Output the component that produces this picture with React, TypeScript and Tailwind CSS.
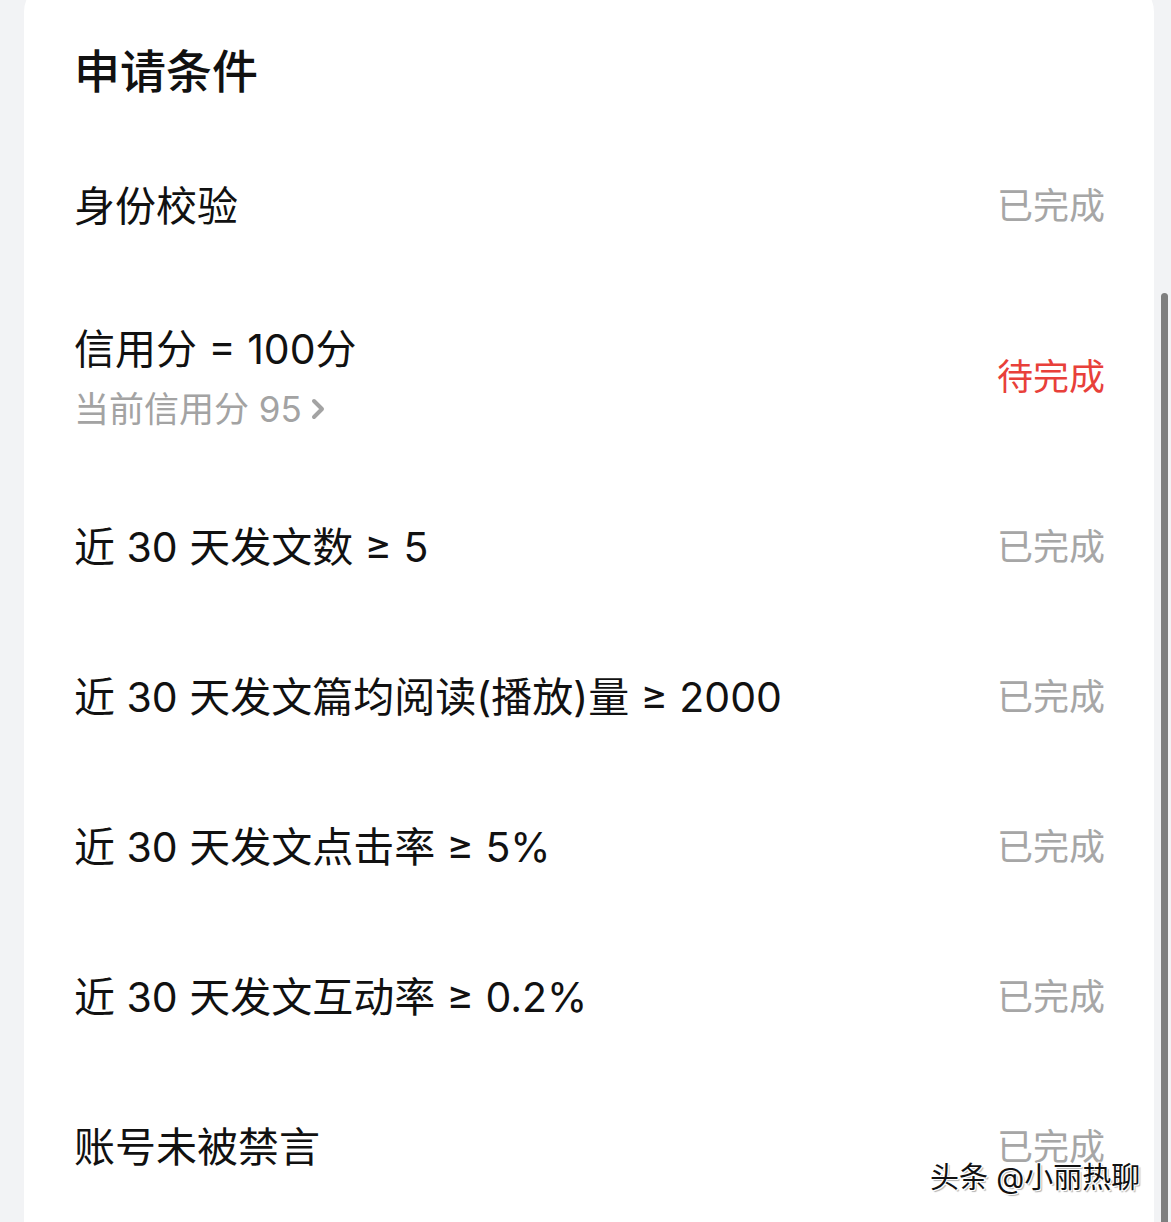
import React from 'react';

const font = { fontFamily: 'Inter, "Noto Sans CJK SC", sans-serif' };

const rows = [
  { label: '身份校验', done: true },
  { label: '信用分 = 100分', sub: '当前信用分 95', done: false },
  { label: '近 30 天发文数 ≥ 5', done: true },
  { label: '近 30 天发文篇均阅读(播放)量 ≥ 2000', done: true },
  { label: '近 30 天发文点击率 ≥ 5%', done: true },
  { label: '近 30 天发文互动率 ≥ 0.2%', done: true },
  { label: '账号未被禁言', done: true },
];

const App = () => {
  return (
    <div className="relative h-[1222px] w-full overflow-hidden bg-[#f2f3f5]" style={font}>
      <div className="ml-[24px] mt-[-20px] w-[1130px] rounded-[32px] bg-white pb-[40px]">
        {/* Title */}
        <div className="h-[151px] pl-[50px] pt-[68px]">
          <h2 className="text-[46px] font-medium leading-none text-[#111]">申请条件</h2>
        </div>

        {rows.map((row) => (
          <div
            key={row.label}
            className={`flex items-center justify-between pl-[50px] pr-[49px] ${row.sub ? 'h-[191px]' : 'h-[150px]'}`}
          >
            <div className="flex flex-col">
              <span className={`text-[41px] leading-none text-[#111] ${row.sub ? 'mt-[2px]' : ''}`}>{row.label}</span>
              {row.sub && (
                <span className="mt-[22px] flex items-center text-[35px] leading-none text-[#a3a3a3]">
                  {row.sub}
                  <svg className="ml-[9px] h-[24px] w-[14px]" viewBox="0 0 14 24" fill="none">
                    <path d="M3 4 L11 12 L3 20" stroke="#a3a3a3" strokeWidth="4" strokeLinecap="round" strokeLinejoin="round" />
                  </svg>
                </span>
              )}
            </div>
            <span className={`text-[36px] leading-none ${row.done ? 'text-[#a6a6a6]' : 'text-[#e8403a]'}`}>
              {row.done ? '已完成' : '待完成'}
            </span>
          </div>
        ))}
      </div>

      {/* Scrollbar */}
      <div className="absolute left-[1161px] top-[293px] h-[960px] w-[7px] rounded-full bg-[#7f7f7f]" />

      {/* Watermark */}
      <div
        className="absolute left-[930px] top-[1163px] text-[29px] leading-none text-[#111]"
        style={{ textShadow: '1px 1px 0 #fff, -1px -1px 0 #fff, 1px -1px 0 #fff, -1px 1px 0 #fff, 2px 2px 1px rgba(0,0,0,0.3)' }}
      >
        头条 @小丽热聊
      </div>
    </div>
  );
};

export default App;
